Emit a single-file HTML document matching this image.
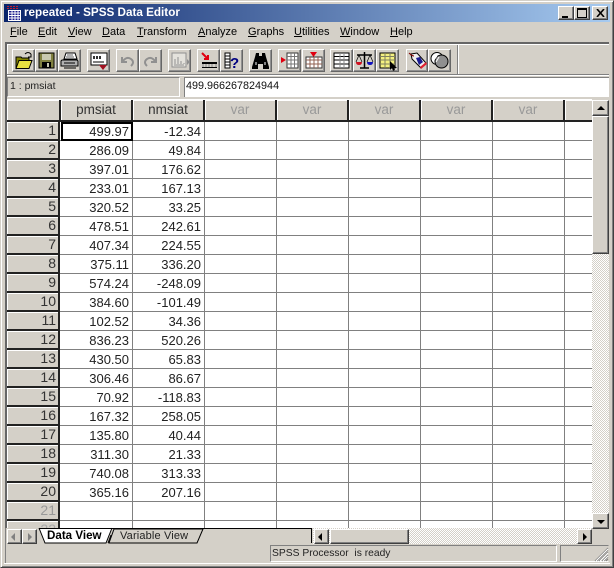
<!DOCTYPE html>
<html><head><meta charset="utf-8"><style>
*{box-sizing:border-box}
html,body{margin:0;padding:0;width:614px;height:568px;overflow:hidden;background:#d4d0c8;font-family:"Liberation Sans",sans-serif}
div,span,svg{position:absolute}
.m{top:25px;font-size:11px;line-height:14px;color:#000;white-space:nowrap}
.m u{text-decoration:underline}
.b{top:49px;height:23px;background:#d4d0c8;border:1px solid;border-color:#fff #666 #666 #fff;box-shadow:inset -1px -1px 0 #909090}
.b svg{left:0;top:0;width:21px;height:21px}
.h{top:100px;height:22px;width:72px;background:#d4d0c8;border-right:2px solid #222;border-bottom:2px solid #222;box-shadow:inset 1px 1px 0 #fff;text-align:center;font-size:13.500px;line-height:20px;color:#333}
.g{color:#999}
.r{left:7px;width:53px;height:19px;background:#d4d0c8;border-right:2px solid #222;border-bottom:2px solid #222;box-shadow:inset 1px 1px 0 #fff;text-align:right;padding-right:2px;font-size:14px;line-height:17px;color:#333}
.c{height:18px;text-align:right;font-size:13px;line-height:18px;color:#222;width:69px}
.sb{background:#d4d0c8;border:1px solid;border-color:#fff #404040 #404040 #fff;box-shadow:inset -1px -1px 0 #808080}
</style></head><body>
<div style="left:0;top:0;width:614px;height:568px;border:1px solid;border-color:#d4d0c8 #404040 #404040 #d4d0c8;box-shadow:inset 1px 1px 0 #fff,inset -1px -1px 0 #808080"></div>
<div style="left:4px;top:4px;width:606px;height:18px;background:linear-gradient(90deg,#0a246a,#a6caf0)"></div>
<svg style="left:6px;top:5px" width="16" height="16" viewBox="0 0 16 16"><rect x="2" y="5" width="13" height="11" fill="#fff"/><rect x="3" y="6" width="11" height="9" fill="#1a1a8c"/><path d="M3 8h11M3 10.500h11M3 13h11M6 6v9M9 6v9M12 6v9" stroke="#fff" stroke-width="1"/><path d="M1 1.500h12M1 3.500h12" stroke="#c02030" stroke-width="1" stroke-dasharray="2 1"/></svg>
<div style="left:24px;top:5px;font-size:11.700px;font-weight:bold;color:#fff;white-space:nowrap;line-height:16px">repeated - SPSS Data Editor</div>
<div class="sb" style="left:558px;top:6px;width:16px;height:14px"><div style="left:3px;top:9px;width:6px;height:2px;background:#000"></div></div>
<div class="sb" style="left:574px;top:6px;width:16px;height:14px"><div style="left:2px;top:1px;width:10px;height:10px;border:1px solid #000;border-top-width:2px"></div></div>
<div class="sb" style="left:592px;top:6px;width:16px;height:14px"><svg style="left:3px;top:2px" width="9" height="8"><path d="M1 0l7 8M8 0l-7 8" stroke="#000" stroke-width="1.600"/></svg></div>

<div class="m" style="left:10px"><u>F</u>ile</div>
<div class="m" style="left:38px"><u>E</u>dit</div>
<div class="m" style="left:68px"><u>V</u>iew</div>
<div class="m" style="left:102px"><u>D</u>ata</div>
<div class="m" style="left:137px"><u>T</u>ransform</div>
<div class="m" style="left:198px"><u>A</u>nalyze</div>
<div class="m" style="left:248px"><u>G</u>raphs</div>
<div class="m" style="left:294px"><u>U</u>tilities</div>
<div class="m" style="left:340px"><u>W</u>indow</div>
<div class="m" style="left:390px"><u>H</u>elp</div>

<div style="left:5px;top:42px;width:604px;height:2px;background:#666"></div>
<div style="left:5px;top:44px;width:604px;height:1px;background:#fff"></div>
<div style="left:5px;top:42px;width:2px;height:486px;background:#666"></div>
<div style="left:7px;top:45px;width:1px;height:31px;background:#fff"></div>
<div style="left:7px;top:74px;width:602px;height:1px;background:#808080"></div>
<div style="left:7px;top:75px;width:602px;height:1px;background:#fff"></div>
<div style="left:457px;top:45px;width:1px;height:29px;background:#808080"></div>
<div style="left:458px;top:45px;width:1px;height:29px;background:#fff"></div>

<div class="b" style="left:12px;width:23px"><svg viewBox="0 0 21 21"><path d="M3 7h5l1 1h7v3H7l-4 8z" fill="#808000" stroke="#000"/><path d="M3 18.500l3-8h13l-3 8z" fill="#e8e040" stroke="#000"/><path d="M12 4q3-3 6 0M18 4v3h-3" fill="none" stroke="#000"/></svg></div>
<div class="b" style="left:35px;width:23px"><svg viewBox="0 0 21 21"><rect x="3" y="3" width="15" height="15" fill="#808040" stroke="#000"/><rect x="6" y="4" width="9" height="6" fill="#c8c8b0"/><rect x="6" y="12" width="9" height="6" fill="#000"/><rect x="11" y="13" width="2" height="4" fill="#c8c8b0"/></svg></div>
<div class="b" style="left:58px;width:23px"><svg viewBox="0 0 21 21"><path d="M7 3h9l2 6H5z" fill="#fff" stroke="#000"/><path d="M3 10h15l1 1v5H2v-5z" fill="#b0b0b0" stroke="#000"/><path d="M5 13h11M5 18h12" stroke="#000"/><path d="M8 5h6M7 7h8" stroke="#606060"/></svg></div>
<div class="b" style="left:87px;width:23px"><svg viewBox="0 0 21 21"><rect x="3" y="3" width="16" height="12" fill="#fff" stroke="#000"/><path d="M5 6h2v3H5zM8 6h2v3H8zM11 6h2v3h-2z" fill="#000" fill-opacity=".8"/><path d="M5 12h11" stroke="#000"/><path d="M11 15h8l-4 5z" fill="#a01020"/></svg></div>
<div class="b" style="left:116px;width:23px"><svg viewBox="0 0 21 21"><path d="M5 7v5h5M6 11q4-5 8-2t0 7" fill="none" stroke="#909090" stroke-width="2"/></svg></div>
<div class="b" style="left:139px;width:23px"><svg viewBox="0 0 21 21"><path d="M16 7v5h-5M15 11q-4-5-8-2t0 7" fill="none" stroke="#909090" stroke-width="2"/></svg></div>
<div class="b" style="left:168px;width:23px"><svg viewBox="0 0 21 21"><rect x="3" y="3" width="14" height="14" fill="#e4e2dc" stroke="#909090"/><path d="M6 14V9M9 14V7M12 14v-3M15 14v-1M5 15h10" stroke="#909090"/><path d="M18 9l3 3-3 3z" fill="#909090"/></svg></div>
<div class="b" style="left:197px;width:23px"><svg viewBox="0 0 21 21"><path d="M4 3l6 6M10 5v4H6" stroke="#e00010" stroke-width="2" fill="none"/><rect x="4" y="12" width="15" height="2" fill="#000"/><path d="M4 17.500h15" stroke="#000"/><path d="M5 14v3M8 14v3M11 14v3M14 14v3M18 14v3" stroke="#888"/></svg></div>
<div class="b" style="left:220px;width:23px"><svg viewBox="0 0 21 21"><path d="M4 3h5v15H4zM4 6h5M4 9h5M4 12h5M4 15h5" fill="#fff" stroke="#000"/><text x="9" y="18" font-size="15" font-weight="bold" fill="#000080" font-family="Liberation Sans">?</text></svg></div>
<div class="b" style="left:249px;width:23px"><svg viewBox="0 0 21 21"><path d="M6 3h3v3h3V3h3l1 4 3 10v2h-6v-5h-5v5H2v-2l3-10z" fill="#000"/><path d="M6 12v3M15 12v3" stroke="#fff"/></svg></div>
<div class="b" style="left:278px;width:23px"><svg viewBox="0 0 21 21"><path d="M2 7l5 3-5 3z" fill="#e00010"/><path d="M8 3h11v15H8z" fill="#fff" stroke="#333"/><path d="M8 6.500h11M8 10h11M8 14h11M12 3v15M15.500 3v15" fill="none" stroke="#777"/></svg></div>
<div class="b" style="left:302px;width:23px"><svg viewBox="0 0 21 21"><path d="M7 2h7l-3.500 5z" fill="#e00010"/><path d="M3 7h16v11H3z" fill="#fff" stroke="#333"/><path d="M3 10h16M3 14h16M7 7v11M11 7v11M15 7v11" fill="none" stroke="#906050"/></svg></div>
<div class="b" style="left:330px;width:23px"><svg viewBox="0 0 21 21"><rect x="3" y="3" width="15" height="15" fill="#fff" stroke="#000"/><path d="M3 6.500h15M3 10h15M3 14h15" stroke="#000"/><path d="M9 3v15M13 3v15" stroke="#888"/></svg></div>
<div class="b" style="left:353px;width:23px"><svg viewBox="0 0 21 21"><path d="M10.500 2v16M6 18h9M3 5h15" stroke="#000" stroke-width="1.500" fill="none"/><path d="M2 12h6q0 3-3 3t-3-3z" fill="#d01020"/><path d="M13 12h6q0 3-3 3t-3-3z" fill="#1010c0"/><path d="M5 5l-3 7M5 5l3 7M16 5l-3 7M16 5l3 7" stroke="#000" stroke-width=".7"/></svg></div>
<div class="b" style="left:376px;width:23px"><svg viewBox="0 0 21 21"><path d="M3 3h15v15H3z" fill="#f4f080" stroke="#000"/><path d="M3 6.500h15M3 10h15M3 14h15M8 3v15M13 3v15" stroke="#808060"/><path d="M13 11v9l2-2 1 3 2-1-1-2h3z" fill="#000"/></svg></div>
<div class="b" style="left:406px;width:22px"><svg viewBox="0 0 21 21"><path d="M4 4l6-1 9 10-5 5-9-9z" fill="#f0f0f0" stroke="#000"/><path d="M9 8l4-1 3 5-4 3z" fill="#1a1a90"/><path d="M13 17l6-5 1 2-6 5z" fill="#e02030"/><path d="M2 3q3 3 5 3" stroke="#800000" fill="none"/></svg></div>
<div class="b" style="left:428px;width:23px"><svg viewBox="0 0 21 21"><circle cx="8" cy="8.500" r="6" fill="#fff" stroke="#000"/><circle cx="12.500" cy="11.500" r="6.500" fill="#909090" stroke="#000"/><path d="M8 6l-3 4M10 7l-3 5" stroke="#fff"/></svg></div>

<div style="left:7px;top:77px;width:173px;height:20px;border:1px solid;border-color:#808080 #fff #fff #808080;font-size:10.500px;line-height:17px;padding-left:2px;color:#222">1 : pmsiat</div>
<div style="left:184px;top:77px;width:425px;height:20px;background:#fff;border-left:1px solid #808080;border-top:1px solid #808080;font-size:10.800px;line-height:16px;padding-left:1px;color:#111">499.966267824944</div>

<div style="left:7px;top:99px;width:585px;height:429px;overflow:hidden;background:#fff">
<div style="left:0;top:23px;width:585px;height:406px;background:repeating-linear-gradient(180deg,transparent 0 18px,#808080 18px 19px)"></div>
<div style="left:125px;top:23px;width:1px;height:406px;background:#808080"></div>
<div style="left:197px;top:23px;width:1px;height:406px;background:#808080"></div>
<div style="left:269px;top:23px;width:1px;height:406px;background:#808080"></div>
<div style="left:341px;top:23px;width:1px;height:406px;background:#808080"></div>
<div style="left:413px;top:23px;width:1px;height:406px;background:#808080"></div>
<div style="left:485px;top:23px;width:1px;height:406px;background:#808080"></div>
<div style="left:557px;top:23px;width:1px;height:406px;background:#808080"></div>
</div>
<div style="left:7px;top:100px;width:54px;height:22px;background:#d4d0c8;border-right:2px solid #222;border-bottom:2px solid #222;box-shadow:inset 1px 1px 0 #fff"></div>
<div class="h" style="left:61px">pmsiat</div>
<div class="h" style="left:133px">nmsiat</div>
<div class="h g" style="left:205px;color:#999">var</div>
<div class="h g" style="left:277px;color:#999">var</div>
<div class="h g" style="left:349px;color:#999">var</div>
<div class="h g" style="left:421px;color:#999">var</div>
<div class="h g" style="left:493px;color:#999">var</div>
<div class="h" style="left:565px;width:27px;border-right:0"></div>

<div class="r" style="top:122px">1</div><div class="c" style="left:60px;top:123px">499.97</div><div class="c" style="left:132px;top:123px">-12.34</div>
<div class="r" style="top:141px">2</div><div class="c" style="left:60px;top:142px">286.09</div><div class="c" style="left:132px;top:142px">49.84</div>
<div class="r" style="top:160px">3</div><div class="c" style="left:60px;top:161px">397.01</div><div class="c" style="left:132px;top:161px">176.62</div>
<div class="r" style="top:179px">4</div><div class="c" style="left:60px;top:180px">233.01</div><div class="c" style="left:132px;top:180px">167.13</div>
<div class="r" style="top:198px">5</div><div class="c" style="left:60px;top:199px">320.52</div><div class="c" style="left:132px;top:199px">33.25</div>
<div class="r" style="top:217px">6</div><div class="c" style="left:60px;top:218px">478.51</div><div class="c" style="left:132px;top:218px">242.61</div>
<div class="r" style="top:236px">7</div><div class="c" style="left:60px;top:237px">407.34</div><div class="c" style="left:132px;top:237px">224.55</div>
<div class="r" style="top:255px">8</div><div class="c" style="left:60px;top:256px">375.11</div><div class="c" style="left:132px;top:256px">336.20</div>
<div class="r" style="top:274px">9</div><div class="c" style="left:60px;top:275px">574.24</div><div class="c" style="left:132px;top:275px">-248.09</div>
<div class="r" style="top:293px">10</div><div class="c" style="left:60px;top:294px">384.60</div><div class="c" style="left:132px;top:294px">-101.49</div>
<div class="r" style="top:312px">11</div><div class="c" style="left:60px;top:313px">102.52</div><div class="c" style="left:132px;top:313px">34.36</div>
<div class="r" style="top:331px">12</div><div class="c" style="left:60px;top:332px">836.23</div><div class="c" style="left:132px;top:332px">520.26</div>
<div class="r" style="top:350px">13</div><div class="c" style="left:60px;top:351px">430.50</div><div class="c" style="left:132px;top:351px">65.83</div>
<div class="r" style="top:369px">14</div><div class="c" style="left:60px;top:370px">306.46</div><div class="c" style="left:132px;top:370px">86.67</div>
<div class="r" style="top:388px">15</div><div class="c" style="left:60px;top:389px">70.92</div><div class="c" style="left:132px;top:389px">-118.83</div>
<div class="r" style="top:407px">16</div><div class="c" style="left:60px;top:408px">167.32</div><div class="c" style="left:132px;top:408px">258.05</div>
<div class="r" style="top:426px">17</div><div class="c" style="left:60px;top:427px">135.80</div><div class="c" style="left:132px;top:427px">40.44</div>
<div class="r" style="top:445px">18</div><div class="c" style="left:60px;top:446px">311.30</div><div class="c" style="left:132px;top:446px">21.33</div>
<div class="r" style="top:464px">19</div><div class="c" style="left:60px;top:465px">740.08</div><div class="c" style="left:132px;top:465px">313.33</div>
<div class="r" style="top:483px">20</div><div class="c" style="left:60px;top:484px">365.16</div><div class="c" style="left:132px;top:484px">207.16</div>
<div class="r" style="top:502px;color:#999">21</div>
<div class="r" style="top:521px;height:7px;overflow:hidden;border-bottom:0;color:#aaa">22</div>
<div style="left:61px;top:122px;width:72px;height:19px;border:2px solid #000"></div>

<div style="left:592px;top:100px;width:17px;height:428px;background:repeating-conic-gradient(#fff 0 25%,#d4d0c8 0 50%) 0 0/2px 2px"></div>
<div class="sb" style="left:592px;top:100px;width:17px;height:16px"><div style="left:4px;top:5px;width:0;height:0;border:4px solid transparent;border-top:0;border-bottom-color:#000"></div></div>
<div class="sb" style="left:592px;top:116px;width:17px;height:138px"></div>
<div class="sb" style="left:592px;top:513px;width:17px;height:16px"><div style="left:4px;top:6px;width:0;height:0;border:4px solid transparent;border-bottom:0;border-top-color:#000"></div></div>

<div style="left:7px;top:528px;width:585px;height:16px;background:#d4d0c8"></div>
<div style="left:313px;top:528px;width:279px;height:16px;background:repeating-conic-gradient(#fff 0 25%,#d4d0c8 0 50%) 0 0/2px 2px"></div>
<div class="sb" style="left:7px;top:529px;width:15px;height:15px"><div style="left:3px;top:3px;width:0;height:0;border:4px solid transparent;border-left:0;border-right-color:#808080"></div></div>
<div class="sb" style="left:22px;top:529px;width:15px;height:15px"><div style="left:5px;top:3px;width:0;height:0;border:4px solid transparent;border-right:0;border-left-color:#808080"></div></div>
<svg style="left:37px;top:527px" width="276" height="18" viewBox="0 0 276 18">
<path d="M72 16L77 2H166L160 16z" fill="#d4d0c8" stroke="#000"/>
<path d="M2 1L8 16H69L75 1z" fill="#fff"/>
<path d="M2 1.500H274.500V16" stroke="#000" fill="none"/>
<path d="M2 1L8 16H69L75 1" stroke="#000" fill="none"/>
<path d="M71 16l3-8" stroke="#000" fill="none"/>
</svg>
<div style="left:47px;top:529px;font-size:11.600px;font-weight:bold;line-height:14px;color:#000;white-space:nowrap">Data View</div>
<div style="left:120px;top:529px;font-size:11px;line-height:14px;color:#222;white-space:nowrap;letter-spacing:.15px">Variable View</div>
<div class="sb" style="left:314px;top:529px;width:15px;height:15px"><div style="left:3px;top:3px;width:0;height:0;border:4px solid transparent;border-left:0;border-right-color:#000"></div></div>
<div class="sb" style="left:330px;top:529px;width:79px;height:15px"></div>
<div class="sb" style="left:577px;top:529px;width:15px;height:15px"><div style="left:5px;top:3px;width:0;height:0;border:4px solid transparent;border-right:0;border-left-color:#000"></div></div>

<div style="left:270px;top:545px;width:287px;height:17px;border:1px solid;border-color:#808080 #fff #fff #808080;font-size:10.300px;line-height:16px;padding-left:1px;color:#222;white-space:nowrap">SPSS Processor&nbsp; is ready</div>
<div style="left:560px;top:545px;width:49px;height:17px;border:1px solid;border-color:#808080 #d4d0c8 #fff #808080"></div>
<svg style="left:594px;top:547px" width="15" height="15"><path d="M14 1L1 14M14 3L3 14M14 5L5 14M14 8L8 14M14 10L10 14M14 12L12 14" stroke="#808080"/><path d="M14 2L2 14M14 6L6 14M14 9L9 14" stroke="#fff"/></svg>
<div style="left:4px;top:563px;width:606px;height:1px;background:#fff"></div>
<div style="left:5px;top:528px;width:1px;height:35px;background:#808080"></div>
</body></html>
